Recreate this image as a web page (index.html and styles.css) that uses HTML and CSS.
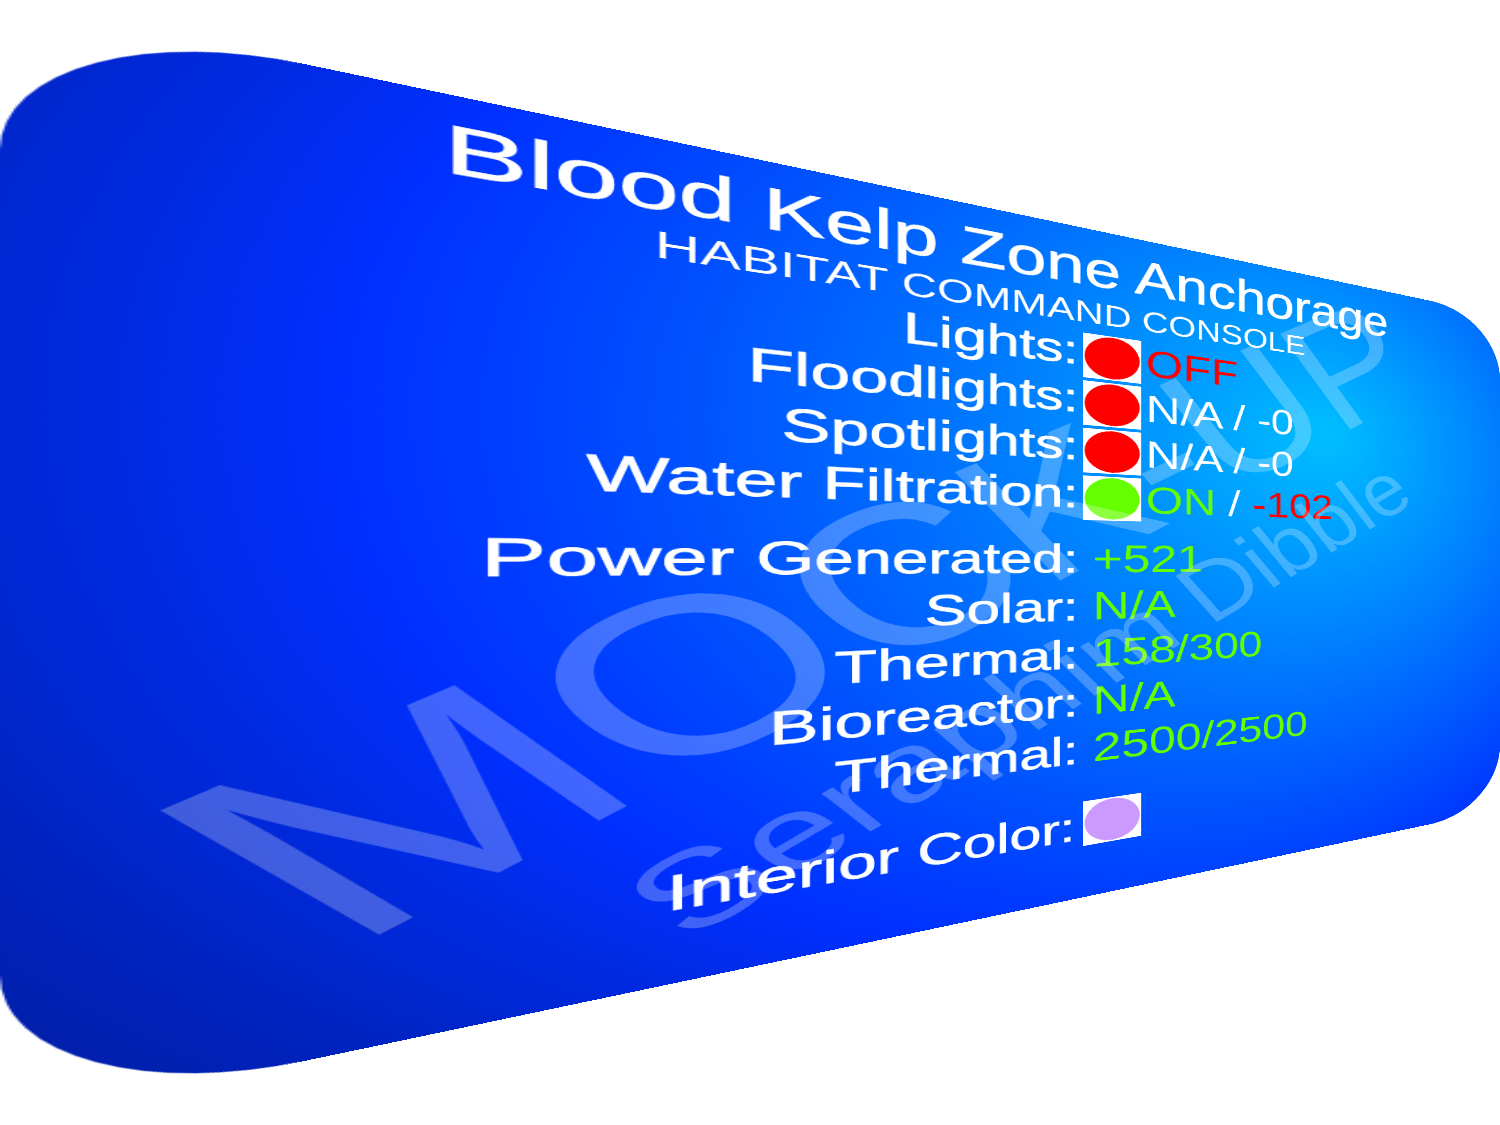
FILE: index.html
```html
<!DOCTYPE html>
<html lang="en">
<head>
<meta charset="utf-8">
<title>Habitat Command Console</title>
<link rel="stylesheet" href="styles.css">
</head>
<body>
<main class="console">
  <svg class="glow" viewBox="0 0 1500 1125" preserveAspectRatio="none" aria-hidden="true">
    <defs>
      <radialGradient id="glow" gradientUnits="userSpaceOnUse" cx="920" cy="460" r="1730" fx="1158" fy="308">
        <stop offset="0" stop-color="#00bfff"/>
        <stop offset="0.5" stop-color="#0030ff"/>
        <stop offset="1" stop-color="#000010"/>
      </radialGradient>
    </defs>
    <rect width="1500" height="1125" fill="url(#glow)"/>
  </svg>

  <header class="heading">
    <h1 class="title">Blood Kelp Zone Anchorage</h1>
    <p class="subtitle">HABITAT COMMAND CONSOLE</p>
  </header>

  <dl class="group systems">
    <dt>Lights:</dt>
    <dd class="with-lamp"><span class="lamp red"></span><span class="bad">OFF</span></dd>
    <dt>Floodlights:</dt>
    <dd class="with-lamp"><span class="lamp red"></span><span>N/A / -0</span></dd>
    <dt>Spotlights:</dt>
    <dd class="with-lamp"><span class="lamp red"></span><span>N/A / -0</span></dd>
    <dt>Water Filtration:</dt>
    <dd class="with-lamp"><span class="lamp green"></span><span><span class="good">ON</span> / <span class="bad">-102</span></span></dd>
  </dl>

  <dl class="group power">
    <dt>Power Generated:</dt>
    <dd class="good">+521</dd>
    <dt>Solar:</dt>
    <dd class="good">N/A</dd>
    <dt>Thermal:</dt>
    <dd class="good">158/300</dd>
    <dt>Bioreactor:</dt>
    <dd class="good">N/A</dd>
    <dt>Thermal:</dt>
    <dd class="good">2500/2500</dd>
  </dl>

  <dl class="group interior">
    <dt>Interior Color:</dt>
    <dd class="with-lamp"><span class="lamp violet"></span></dd>
  </dl>

  <div class="watermark">
    <span class="mark-large">MOCK-UP</span>
    <span class="mark-small">Seraphim Dibble</span>
  </div>
</main>
</body>
</html>
```

FILE: styles.css
```css
* {
  box-sizing: border-box;
}

body {
  margin: 0;
  overflow: hidden;
  background: #fff;
  color: #fff;
  font-family: "Liberation Sans", Arial, sans-serif;
}

/* The wall screen turns away from the viewer around its left edge. */
.console {
  position: relative;
  width: 100%;
  aspect-ratio: 4 / 3;
  padding-top: 18px;
  overflow: hidden;
  border-radius: 150px;
  transform-origin: left center;
  transform: perspective(50vw) scaleX(2.959) rotateY(39.68deg);
}

.glow {
  position: absolute;
  inset: 0;
  z-index: -1;
  width: 100%;
  height: 100%;
}

.heading {
  margin-bottom: 5px;
  text-align: center;
}

.title,
.subtitle {
  margin: 0;
  font-weight: 400;
  white-space: nowrap;
}

.title {
  font-size: 83px;
  line-height: 96px;
}

.subtitle {
  font-size: 50px;
  line-height: 54px;
}

.title,
dt {
  -webkit-text-stroke: 1px currentColor;
}

.group {
  display: grid;
  grid-template-columns: 53% 1fr;
  grid-auto-rows: 80px;
  align-items: start;
  column-gap: 6px;
  margin: 0 2px 0 -2px;
  font-size: 66px;
  line-height: 80px;
  white-space: nowrap;
}

.power {
  margin-top: 23px;
}

.interior {
  margin-top: 48px;
}

dt {
  text-align: right;
}

.systems dt {
  line-height: 68px;
}

.interior dt {
  padding-right: 4px;
}

dd {
  margin: 0;
  padding-left: 12px;
}

.with-lamp {
  display: flex;
  align-items: center;
  gap: 6px;
  padding-left: 0;
}

.lamp {
  width: 75px;
  height: 75px;
  padding: 2px;
  background: #fff;
}

.lamp::before {
  content: "";
  display: block;
  height: 100%;
  border-radius: 50%;
  background: currentColor;
}

.red,
.bad {
  color: #f00;
}

.green,
.good {
  color: #6f0;
}

.violet {
  color: #c9f;
}

/* Diagonal stamp over the whole screen */
.watermark {
  position: absolute;
  inset: 0;
  display: flex;
  flex-direction: column;
  align-items: center;
  justify-content: center;
  gap: 12px;
  padding: 26px 32px 0 0;
  opacity: 0.25;
  white-space: nowrap;
  transform: rotate(-35deg);
}

.mark-large {
  font-size: 302px;
  line-height: 300px;
}

.mark-small {
  font-size: 151px;
  line-height: 150px;
}
```
